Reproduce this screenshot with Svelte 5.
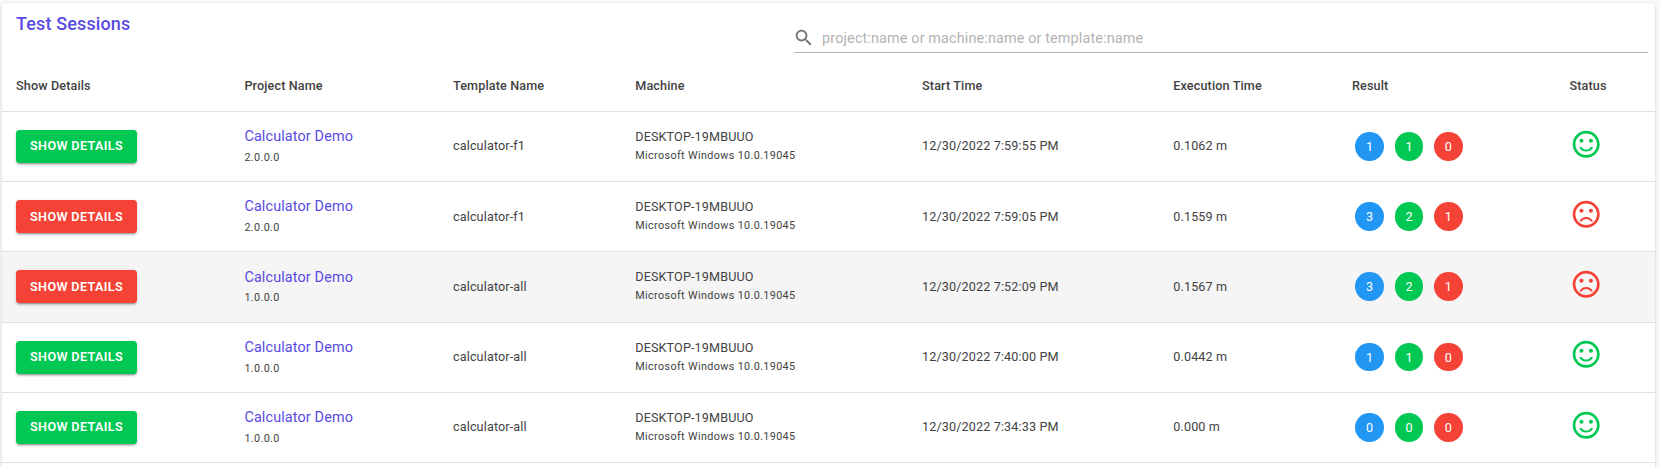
<script>
  const columns = ['Show Details', 'Project Name', 'Template Name', 'Machine', 'Start Time', 'Execution Time', 'Result', 'Status'];

  const machine = 'DESKTOP-19MBUUO';
  const os = 'Microsoft Windows 10.0.19045';

  const sessions = [
    { version: '2.0.0.0', template: 'calculator-f1', start: '12/30/2022 7:59:55 PM', time: '0.1062 m', result: [1, 1, 0] },
    { version: '2.0.0.0', template: 'calculator-f1', start: '12/30/2022 7:59:05 PM', time: '0.1559 m', result: [3, 2, 1] },
    { version: '1.0.0.0', template: 'calculator-all', start: '12/30/2022 7:52:09 PM', time: '0.1567 m', result: [3, 2, 1], hovered: true },
    { version: '1.0.0.0', template: 'calculator-all', start: '12/30/2022 7:40:00 PM', time: '0.0442 m', result: [1, 1, 0] },
    { version: '1.0.0.0', template: 'calculator-all', start: '12/30/2022 7:34:33 PM', time: '0.000 m', result: [0, 0, 0] }
  ];
</script>

<main>
  <section class="card">
    <header class="toolbar">
      <h1>Test Sessions</h1>
      <label class="search">
        <svg viewBox="0 0 24 24"><path d="M15.5 14h-.79l-.28-.27C15.41 12.59 16 11.11 16 9.5 16 5.91 13.09 3 9.5 3S3 5.91 3 9.5 5.91 16 9.5 16c1.61 0 3.09-.59 4.23-1.57l.27.28v.79l5 4.99L20.49 19l-4.99-5zm-6 0C7.01 14 5 11.99 5 9.5S7.01 5 9.5 5 14 7.01 14 9.5 11.99 14 9.5 14z" /></svg>
        <input type="text" placeholder="project:name or machine:name or template:name" />
      </label>
    </header>

    <div class="row head">
      {#each columns as column}
        <div>{column}</div>
      {/each}
    </div>

    {#each sessions as s}
      {@const failed = s.result[2] > 0}
      <div class="row" class:hovered={s.hovered}>
        <div><button class:failed>Show Details</button></div>
        <div class="project">
          <a href="#project">Calculator Demo</a>
          <small>{s.version}</small>
        </div>
        <div class="text">{s.template}</div>
        <div class="machine">
          <span>{machine}</span>
          <small>{os}</small>
        </div>
        <div class="text">{s.start}</div>
        <div class="text">{s.time}</div>
        <div class="chips">
          <span class="chip total">{s.result[0]}</span>
          <span class="chip passed">{s.result[1]}</span>
          <span class="chip error">{s.result[2]}</span>
        </div>
        <div class="status" class:failed>
          <svg viewBox="0 0 24 24">
            <circle cx="15.5" cy="9.5" r="1.5" />
            <circle cx="8.5" cy="9.5" r="1.5" />
            <path d="M11.99 2C6.47 2 2 6.48 2 12s4.47 10 9.99 10C17.52 22 22 17.52 22 12S17.52 2 11.99 2zM12 20c-4.42 0-8-3.58-8-8s3.58-8 8-8 8 3.58 8 8-3.58 8-8 8z" />
            {#if failed}
              <path d="M12 14c-2.33 0-4.32 1.45-5.12 3.5h1.67c.69-1.19 1.97-2 3.45-2s2.75.81 3.45 2h1.67c-.8-2.05-2.79-3.5-5.12-3.5z" />
            {:else}
              <path d="M12 16c-1.48 0-2.75-.81-3.45-2H6.88c.8 2.05 2.79 3.5 5.12 3.5s4.32-1.45 5.12-3.5h-1.67c-.7 1.19-1.97 2-3.45 2z" />
            {/if}
          </svg>
        </div>
      </div>
    {/each}
  </section>
</main>

<style>
  :global(body) {
    overflow: hidden;
    background: #fafafa;
  }

  main {
    box-sizing: border-box;
    height: 467px;
    padding: 3px 5px 0 2px;
    overflow: hidden;
    font-family: Roboto, sans-serif;
    font-size: 12.6px;
    letter-spacing: 0.01071em;
    color: #424242;
  }

  .card {
    height: 520px;
    border-radius: 4px;
    background: #fff;
    box-shadow: 0 2px 1px -1px rgba(0, 0, 0, 0.2), 0 1px 1px 0 rgba(0, 0, 0, 0.14), 0 1px 4px 0 rgba(0, 0, 0, 0.16);
  }

  .toolbar {
    box-sizing: border-box;
    display: flex;
    justify-content: space-between;
    height: 57.6px;
    padding: 0 7.2px 0 14px;
  }

  h1 {
    margin: 7px 0 0;
    font-size: 18px;
    font-weight: 500;
    line-height: 28.8px;
    letter-spacing: 0.0075em;
    color: #594ae2;
  }

  .search {
    box-sizing: border-box;
    display: flex;
    align-items: center;
    width: 854px;
    height: 29px;
    margin-top: 21px;
    border-bottom: 1px solid #b5b5b5;
  }

  .search svg {
    width: 21.6px;
    height: 21.6px;
    margin: 0 7.1px 0 -0.4px;
    fill: #757575;
  }

  input {
    flex: 1;
    padding: 0;
    border: 0;
    outline: 0;
    background: none;
    font: 14.4px Roboto, sans-serif;
    letter-spacing: 0.00938em;
  }

  input::placeholder {
    color: #b3b3b3;
    opacity: 1;
  }

  .row {
    box-sizing: border-box;
    display: grid;
    grid-template-columns: 228.4px 208.6px 182.3px 286.8px 251.2px 178.8px 217.4px 1fr;
    align-items: center;
    height: 70.2px;
    padding-left: 14px;
    border-bottom: 1px solid #e0e0e0;
  }

  .head {
    height: 51.4px;
    font-weight: 500;
  }

  .hovered {
    background: #f5f5f5;
  }

  .text {
    padding-bottom: 1.4px;
  }

  button {
    display: block;
    width: 121px;
    height: 33px;
    padding: 0 0 1.4px;
    border: 0;
    border-radius: 3.6px;
    background: #00c853;
    box-shadow: 0 3px 1px -2px rgba(0, 0, 0, 0.2), 0 2px 2px 0 rgba(0, 0, 0, 0.14), 0 1px 4px 0 rgba(0, 0, 0, 0.12);
    color: #fff;
    font: 600 12.6px Roboto, sans-serif;
    letter-spacing: 0.02857em;
    text-transform: uppercase;
  }

  button.failed {
    background: #f44336;
  }

  .project,
  .machine {
    display: flex;
    flex-direction: column;
  }

  .machine {
    padding-bottom: 0.2px;
  }

  a {
    margin-bottom: 0.8px;
    font-size: 14.4px;
    line-height: 22px;
    letter-spacing: 0.00938em;
    color: #594ae2;
    text-decoration: none;
  }

  small {
    font-size: 10.8px;
    line-height: 18px;
    letter-spacing: 0.0333em;
  }

  .machine span {
    margin-bottom: 1px;
    line-height: 18px;
  }

  .chips {
    display: flex;
    gap: 10.6px;
    padding: 0 0 0.4px 3.2px;
  }

  .chip {
    width: 28.8px;
    height: 28.8px;
    border-radius: 50%;
    color: #fff;
    line-height: 29px;
    text-align: center;
  }

  .total {
    background: #2196f3;
  }

  .passed {
    background: #00c853;
  }

  .error {
    background: #f44336;
  }

  .status svg {
    display: block;
    width: 32.4px;
    height: 32.4px;
    margin: -5px 0 0 0.2px;
    fill: #00c853;
  }

  .status.failed svg {
    fill: #f44336;
  }
</style>
